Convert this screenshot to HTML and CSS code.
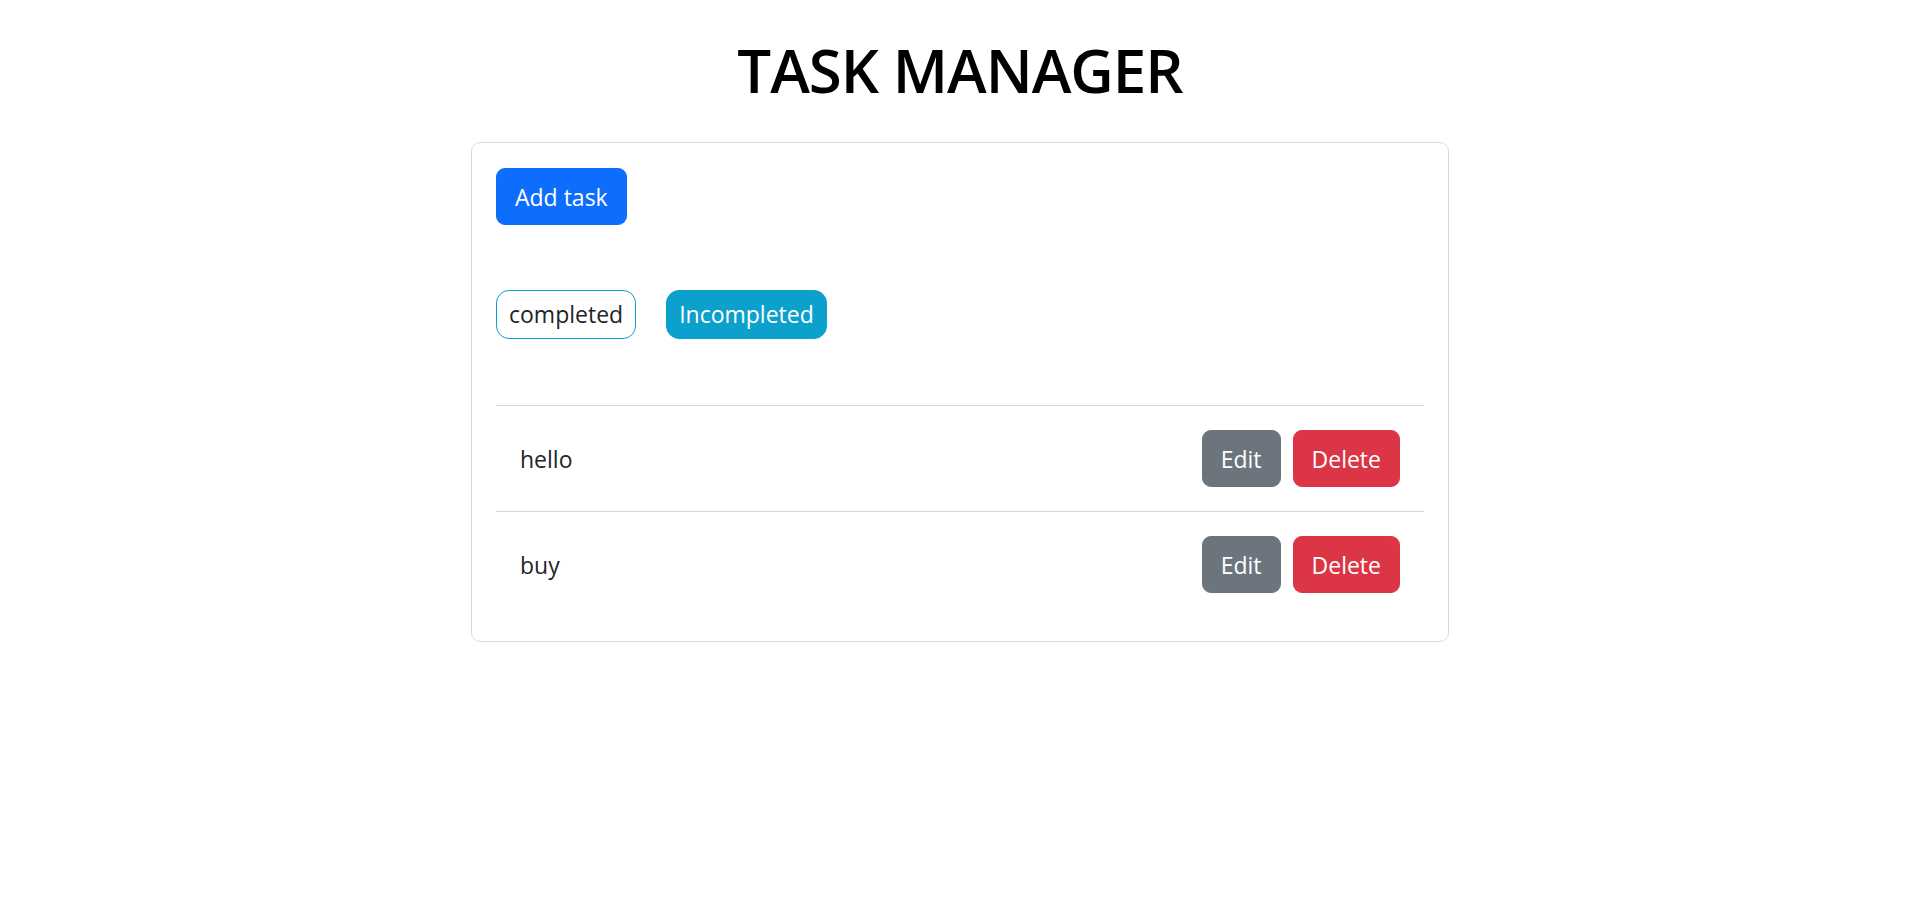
FILE: index.html
```html
<!DOCTYPE html>
<html>
<head>
<meta charset="utf-8">
<link rel="stylesheet" href="styles.css">
</head>
<body>
<h1 class="title">TASK MANAGER</h1>
<div class="card">
  <div class="toolbar">
    <button class="btn btn-primary">Add task</button>
  </div>
  <div class="filters">
    <button class="fbtn fbtn-outline">completed</button>
    <button class="fbtn fbtn-solid">Incompleted</button>
  </div>
  <ul class="list">
    <li class="item">
      <span class="item-text">hello</span>
      <div class="actions">
        <button class="btn btn-secondary">Edit</button>
        <button class="btn btn-danger">Delete</button>
      </div>
    </li>
    <li class="item">
      <span class="item-text">buy</span>
      <div class="actions">
        <button class="btn btn-secondary">Edit</button>
        <button class="btn btn-danger">Delete</button>
      </div>
    </li>
  </ul>
</div>
</body>
</html>
```
FILE: styles.css
```css
* { box-sizing: border-box; }
html, body { margin: 0; padding: 0; background: #fff; }
body {
  font-family: "Open Sans", "Noto Sans", sans-serif;
  color: #212529;
  font-size: 23px;
  line-height: 36px;
}
.title {
  margin: 34px 0 36px;
  font-size: 60px;
  font-weight: 600;
  letter-spacing: -1px;
  line-height: 72px;
  text-align: center;
  color: #000;
}
.card {
  width: 978px;
  margin: 0 auto;
  border: 1px solid #dadada;
  border-radius: 9px;
  padding: 25px 24px 24px;
}
.toolbar { display: flex; }
.btn {
  font-family: inherit;
  font-size: 23px;
  line-height: 36px;
  padding: 9.5px 18px;
  border: 1px solid transparent;
  border-radius: 9px;
  color: #fff;
  cursor: pointer;
}
.btn-primary { background: #0d6efd; border-color: #0d6efd; }
.btn-secondary { background: #6c757d; border-color: #6c757d; }
.btn-danger { background: #dc3545; border-color: #dc3545; }
.filters {
  display: flex;
  gap: 30px;
  margin-top: 65px;
}
.fbtn {
  font-family: inherit;
  font-size: 23px;
  line-height: 35px;
  padding: 6px 12px;
  border: 1px solid #0ca1cc;
  border-radius: 13px;
  cursor: pointer;
}
.fbtn-outline { background: #fff; color: #212529; }
.fbtn-solid { background: #0ca1cc; color: #fff; }
.list {
  list-style: none;
  margin: 66px 0 0;
  padding: 0;
}
.item {
  display: flex;
  align-items: center;
  justify-content: space-between;
  padding: 24px;
  border-top: 1px solid #d6d6d6;
}
.item-text { color: #212529; }
.actions { display: flex; gap: 12px; }
```
